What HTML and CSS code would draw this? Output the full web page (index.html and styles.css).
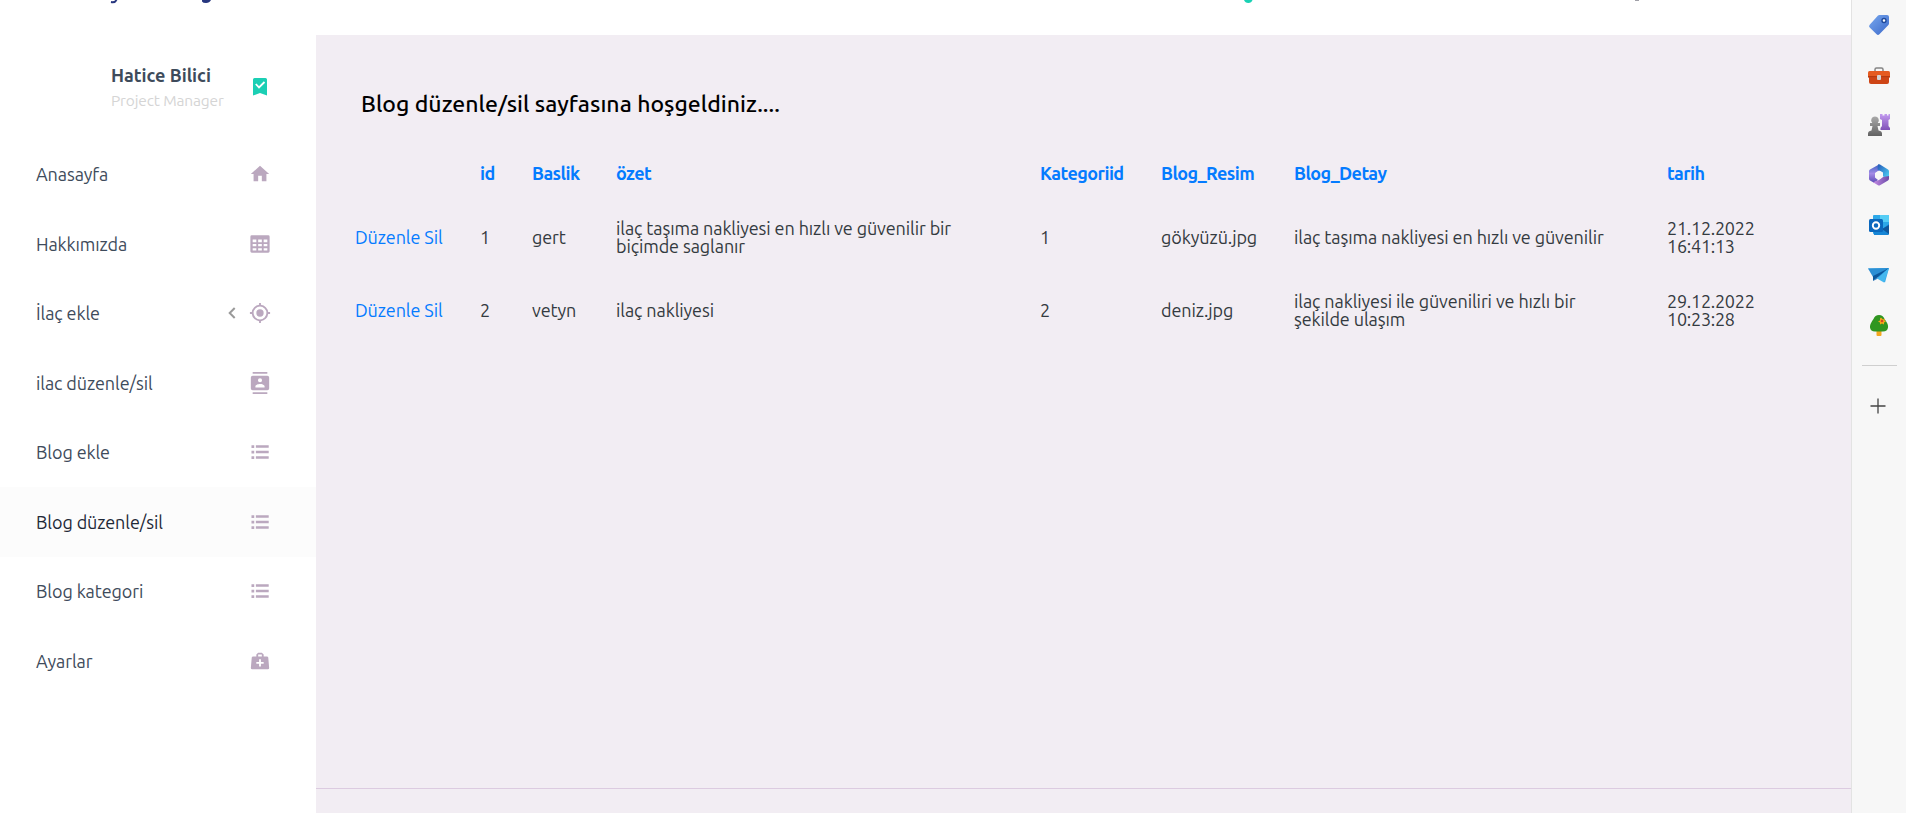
FILE: index.html
```
<!DOCTYPE html>
<html lang="tr">
<head>
<meta charset="utf-8">
<title>Blog düzenle/sil</title>
<link rel="stylesheet" href="styles.css">
</head>
<body>
<svg class="defs" width="0" height="0">
  <symbol id="list" viewBox="0 0 24 24"><path d="M2.700 4.500h3v3h-3zM7.500 4.700H21.500v2.600H7.500zM2.700 10.500h3v3h-3zM7.500 10.700H21.500v2.600H7.500zM2.700 16.500h3v3h-3zM7.500 16.700H21.500v2.600H7.500z"/></symbol>
</svg>
<div class="app">
  <div class="page">
    <header class="navbar">
      <svg width="1851" height="4" viewBox="0 0 1851 4">
        <path d="M111 2q4 .8 5.500-2" fill="none" stroke="#27367f" stroke-width="2"/>
        <path d="M202 0h9q-1.500 3-5 3-3 0-4-1.500z" fill="#27367f"/>
        <path d="M1244 0h8.500q-1 3-4.200 3t-4.300-3z" fill="#19d1b4"/>
        <path d="M1635 0h4v1h-4z" fill="#a0a0a8"/>
      </svg>
    </header>
    <div class="body">
      <nav class="sidebar">
        <div class="profile">
          <div class="who"><div class="name">Hatice Bilici</div><div class="role">Project Manager</div></div>
          <svg class="mark" width="14" height="18" viewBox="0 0 14 18"><path d="M1.500 0h11A1.500 1.500 0 0 1 14 1.500V17.500L7 15 0 17.500V1.500A1.500 1.500 0 0 1 1.500 0z" fill="#1bcfb4"/><path d="M2.800 6l3.200 3.400L11.500 4" fill="none" stroke="#fff" stroke-width="1.800"/></svg>
        </div>
        <a class="item"><span>Anasayfa</span><svg class="ic" viewBox="0 0 24 24"><path d="M10 20v-6h4v6h5v-8h3L12 3 2 12h3v8z"/></svg></a>
        <a class="item"><span>Hakkımızda</span><svg class="ic" viewBox="0 0 24 24"><path fill-rule="evenodd" d="M3 2.500h18a1.500 1.500 0 0 1 1.500 1.500v16a1.500 1.500 0 0 1-1.500 1.500H3A1.500 1.500 0 0 1 1.500 20V4A1.500 1.500 0 0 1 3 2.500zM4 7v3h4V7zm6 0v3h4V7zm6 0v3h4V7zM4 12v2.500h4V12zm6 0v2.500h4V12zm6 0v2.500h4V12zM4 16.500V19h4v-2.500zm6 0V19h4v-2.500zm6 0V19h4v-2.500z"/></svg></a>
        <a class="item"><span>İlaç ekle</span><svg class="chev" width="8" height="12" viewBox="0 0 8 12"><path d="M6.700 1L1.700 6l5 5"/></svg><svg class="ic" viewBox="0 0 24 24"><path d="M12 8a4 4 0 1 1 0 8 4 4 0 0 1 0-8M3.050 13H1v-2h2.050A9 9 0 0 1 11 3.050V1h2v2.050A9 9 0 0 1 20.950 11H23v2h-2.050A9 9 0 0 1 13 20.950V23h-2v-2.050A9 9 0 0 1 3.050 13M12 5a7 7 0 1 0 0 14 7 7 0 0 0 0-14z"/></svg></a>
        <a class="item"><span>ilac düzenle/sil</span><svg class="ic" viewBox="0 0 24 24"><path fill-rule="evenodd" d="M4 0h16v2H4zM4 22h16v2H4zM4 4h16a2 2 0 0 1 2 2v12a2 2 0 0 1-2 2H4a2 2 0 0 1-2-2V6a2 2 0 0 1 2-2zM12 6.750a2.250 2.250 0 1 0 0 4.500 2.250 2.250 0 0 0 0-4.500zM17 17v-1.500c0-1.670-3.330-2.500-5-2.500s-5 .83-5 2.500V17z"/></svg></a>
        <a class="item"><span>Blog ekle</span><svg class="ic"><use href="#list"/></svg></a>
        <a class="item active"><span>Blog düzenle/sil</span><svg class="ic"><use href="#list"/></svg></a>
        <a class="item"><span>Blog kategori</span><svg class="ic"><use href="#list"/></svg></a>
        <a class="item"><span>Ayarlar</span><svg class="ic" viewBox="0 0 24 24"><path fill-rule="evenodd" d="M10 3h4l2 2v2h3.500A1.500 1.500 0 0 1 21 8.300L22 19.500A1.500 1.500 0 0 1 20.500 21h-17A1.500 1.500 0 0 1 2 19.500L3 8.300A1.500 1.500 0 0 1 4.500 7H8V5zm0 2v2h4V5zM11 10v3H8v2h3v3h2v-3h3v-2h-3v-3z"/></svg></a>
      </nav>
      <main class="main">
        <div class="content">
          <h1>Blog düzenle/sil sayfasına hoşgeldiniz....</h1>
          <table>
            <colgroup><col class="c1"><col class="c2"><col class="c3"><col class="c4"><col class="c5"><col class="c6"><col class="c7"><col class="c8"></colgroup>
            <thead><tr><th></th><th>id</th><th>Baslik</th><th>özet</th><th>Kategoriid</th><th>Blog_Resim</th><th>Blog_Detay</th><th>tarih</th></tr></thead>
            <tbody>
              <tr><td class="links"><a>Düzenle</a> <a>Sil</a></td><td>1</td><td>gert</td><td>ilaç taşıma nakliyesi en hızlı ve güvenilir bir<br>biçimde saglanır</td><td>1</td><td>gökyüzü.jpg</td><td>ilaç taşıma nakliyesi en hızlı ve güvenilir</td><td class="date">21.12.2022<br>16:41:13</td></tr>
              <tr><td class="links"><a>Düzenle</a> <a>Sil</a></td><td>2</td><td>vetyn</td><td>ilaç nakliyesi</td><td>2</td><td>deniz.jpg</td><td>ilaç nakliyesi ile güveniliri ve hızlı bir<br>şekilde ulaşım</td><td class="date">29.12.2022<br>10:23:28</td></tr>
            </tbody>
          </table>
        </div>
        <footer class="footer"></footer>
      </main>
    </div>
  </div>
  <aside class="edge">
    <svg class="app-ic" viewBox="0 0 24 24"><defs><linearGradient id="tag" x2="1" y2="1"><stop stop-color="#77a8ef"/><stop offset="1" stop-color="#3d69c9"/></linearGradient></defs><path d="M12.500 2H20a2 2 0 0 1 2 2v6.500a2 2 0 0 1-.6 1.400l-9 9.300a2 2 0 0 1-2.800 0l-6.900-6.600a2 2 0 0 1 0-2.800L11 2.600a2 2 0 0 1 1.500-.6z" fill="url(#tag)"/><circle cx="17" cy="7.500" r="2" fill="#fff" stroke="#214a9b" stroke-width="1.400"/></svg>
    <svg class="app-ic" viewBox="0 0 24 24"><path d="M8 9V6.500Q8 5 9.500 5h5Q16 5 16 6.500V9" fill="none" stroke="#858585" stroke-width="1.500"/><path d="M2 13h20v6a2 2 0 0 1-2 2H4a2 2 0 0 1-2-2z" fill="#ce4516"/><rect x="1" y="8" width="22" height="6.500" rx="1.500" fill="#e55b21"/><path d="M1 13h22v1.500H1z" fill="#b63b12"/><rect x="10" y="12" width="4" height="5" rx="1" fill="#d4d4d4"/></svg>
    <svg class="app-ic" viewBox="0 0 24 24"><defs><linearGradient id="rook" x2="0" y2="1"><stop stop-color="#c29af0"/><stop offset="1" stop-color="#8052b6"/></linearGradient><linearGradient id="pawn" x2="0" y2="1"><stop stop-color="#aaa"/><stop offset="1" stop-color="#626262"/></linearGradient></defs><path d="M13 1h2.500v1.500h2V1H20v1.500h1.500V1H23v5l-1.500 1v6L23 15v2h-9.500v-2l1.500-2V7l-2-1z" fill="url(#rook)"/><path d="M8 3.500a3.800 3.800 0 0 1 2.700 6.500H13v3h-2.500l1 4.500Q15 18 15 20.500V23H1v-2.500Q1 18 4.500 17.500l1-4.500H3v-3h2.300A3.800 3.800 0 0 1 8 3.500z" fill="url(#pawn)"/></svg>
    <svg class="app-ic" viewBox="0 0 24 24"><defs><linearGradient id="hexl" x2="0" y2="1"><stop stop-color="#3b63c4"/><stop offset=".5" stop-color="#a48be6"/><stop offset="1" stop-color="#5c4bb5"/></linearGradient><linearGradient id="hexr" x2="1" y2="1"><stop stop-color="#2456b8"/><stop offset="1" stop-color="#4fd8f7"/></linearGradient><linearGradient id="hexb" x2="1" y2="0"><stop stop-color="#c58be4"/><stop offset="1" stop-color="#6a4aa8"/></linearGradient></defs><path d="M12 1.500L3 6.500Q2 7 2 8.500v7q0 1.500 1 2l4 2.200 4-2.700-3-2.500V10l6-3.500z" fill="url(#hexl)"/><path d="M11 1.500q1-.7 2 0l8 5q1 .6 1 2v7l-6-2V9.500l-5.500-3z" fill="url(#hexr)"/><path d="M22 13v2.500q0 1.300-1 2l-8 4.700q-1 .6-2 0l-5-3 6-2.200 4-3z" fill="url(#hexb)"/><circle cx="12" cy="12" r="3.800" fill="#f7f7f7"/></svg>
    <svg class="app-ic" viewBox="0 0 24 24"><rect x="6" y="2" width="16" height="19" rx="1" fill="#2da8e8"/><path d="M13 2h9v7h-9z" fill="#55cdf5"/><path d="M6 13l8 4 8-6v10q0 1-1 1H7z" fill="#1685d5"/><path d="M22 12v9l-7-5z" fill="#0f579c"/><rect x="2" y="6" width="14" height="13" rx="1.500" fill="#0b68bd"/><circle cx="9" cy="12.500" r="3.200" fill="none" stroke="#fff" stroke-width="1.900"/></svg>
    <svg class="app-ic" viewBox="0 0 24 24"><path d="M1 5.500L22 5l-4 14.500-5.500-3.500z" fill="#39aae8"/><path d="M1 5.500L22 5 6 14z" fill="#2c8fd4"/><path d="M22 5L6 13v5z" fill="#0b579c"/><path d="M22 5L6 18l4-2z" fill="#1976c4"/><path d="M22 5l-5 14.500-7-4z" fill="#45b8ef"/></svg>
    <svg class="app-ic" viewBox="0 0 24 24"><path d="M9.500 17h5v5q0 1-1 1h-3q-1 0-1-1z" fill="#f4a720"/><path d="M12 2q4 0 5.500 4 4 5 3.500 8.500-.5 4-5 4H8q-4.500 0-5-4Q2.700 11 6.500 6 8 2 12 2z" fill="#309621"/><path d="M14 4.500l2 2 2-1-.5 2 1.500 1-2 1v2l-2-1-2 1v-2l-2-1 2-1v-2z" fill="#f6a71b"/><circle cx="15" cy="8" r="1.300" fill="#d64624"/></svg>
    <div class="divider"></div>
    <svg class="plus" width="16" height="16" viewBox="0 0 16 16"><path d="M8 .5v15M.5 8h15"/></svg>
  </aside>
</div>
</body>
</html>
```
FILE: styles.css
```
* { box-sizing: border-box; }
body { margin: 0; font-family: Ubuntu, "Noto Sans", sans-serif; font-size: 18px; color: #343a40; background: #fff; overflow: hidden; }
.defs { display: block; }
.app { display: flex; height: 813px; }
.page { width: 1851px; display: flex; flex-direction: column; }
.navbar { height: 35px; overflow: hidden; }
.navbar svg { display: block; }
.body { flex: 1; display: flex; }
.sidebar { width: 316px; background: #fff; }
.profile { height: 104.500px; padding: 28px 49px 0 111px; display: flex; justify-content: space-between; }
.name { font-weight: 600; line-height: 24px; color: #3e4b5b; letter-spacing: 0; white-space: nowrap; }
.role { font-size: 15.500px; line-height: 28px; color: #d5d5d5; letter-spacing: -.15px; white-space: nowrap; }
.mark { margin-top: 15px; flex: none; }
.item { height: 69.500px; padding: 0 46px 0 36px; display: flex; align-items: center; color: #3e4b5b; white-space: nowrap; }
.item span { margin-right: auto; letter-spacing: -.1px; }
.active { background: #fcfcfc; color: #1f2937; }
.ic { width: 22px; height: 22px; margin-right: -1px; fill: #bba8bf; }
.chev { margin-right: 13px; fill: none; stroke: #9a9a9a; stroke-width: 2; }
.main { flex: 1; background: #f2edf3; display: flex; flex-direction: column; }
.content { flex: 1; padding: 54px 45px 0 20px; }
h1 { margin: 0 0 28px 25px; font-weight: 500; font-size: 23px; line-height: 30px; color: #000; letter-spacing: .02px; }
table { width: 1470px; table-layout: fixed; border-collapse: collapse; white-space: nowrap; line-height: 17.500px; letter-spacing: -.1px; }
th, td { padding: 0 19px; text-align: left; vertical-align: middle; }
th { height: 54px; font-weight: 600; color: #047bff; letter-spacing: -.55px; }
td { height: 73px; }
.date { letter-spacing: -.25px; }
.links a { color: #047bff; }
.c1 { width: 125px; } .c2 { width: 52px; } .c3 { width: 84px; } .c4 { width: 424px; }
.c5 { width: 121px; } .c6 { width: 133px; } .c7 { width: 373px; } .c8 { width: 158px; }
.footer { height: 25px; border-top: 1px solid #dccbe0; }
.edge { width: 55px; background: #f7f7f7; border-left: 1px solid #e3e3e3; padding-top: 13px; display: flex; flex-direction: column; align-items: center; }
.app-ic { width: 24px; height: 24px; margin-bottom: 26px; flex: none; }
.divider { width: 35px; height: 1px; background: #cfcfcf; margin-top: 2px; margin-bottom: 31.500px; }
.plus { fill: none; stroke: #444; stroke-width: 1.300; margin-right: 2px; }
```
